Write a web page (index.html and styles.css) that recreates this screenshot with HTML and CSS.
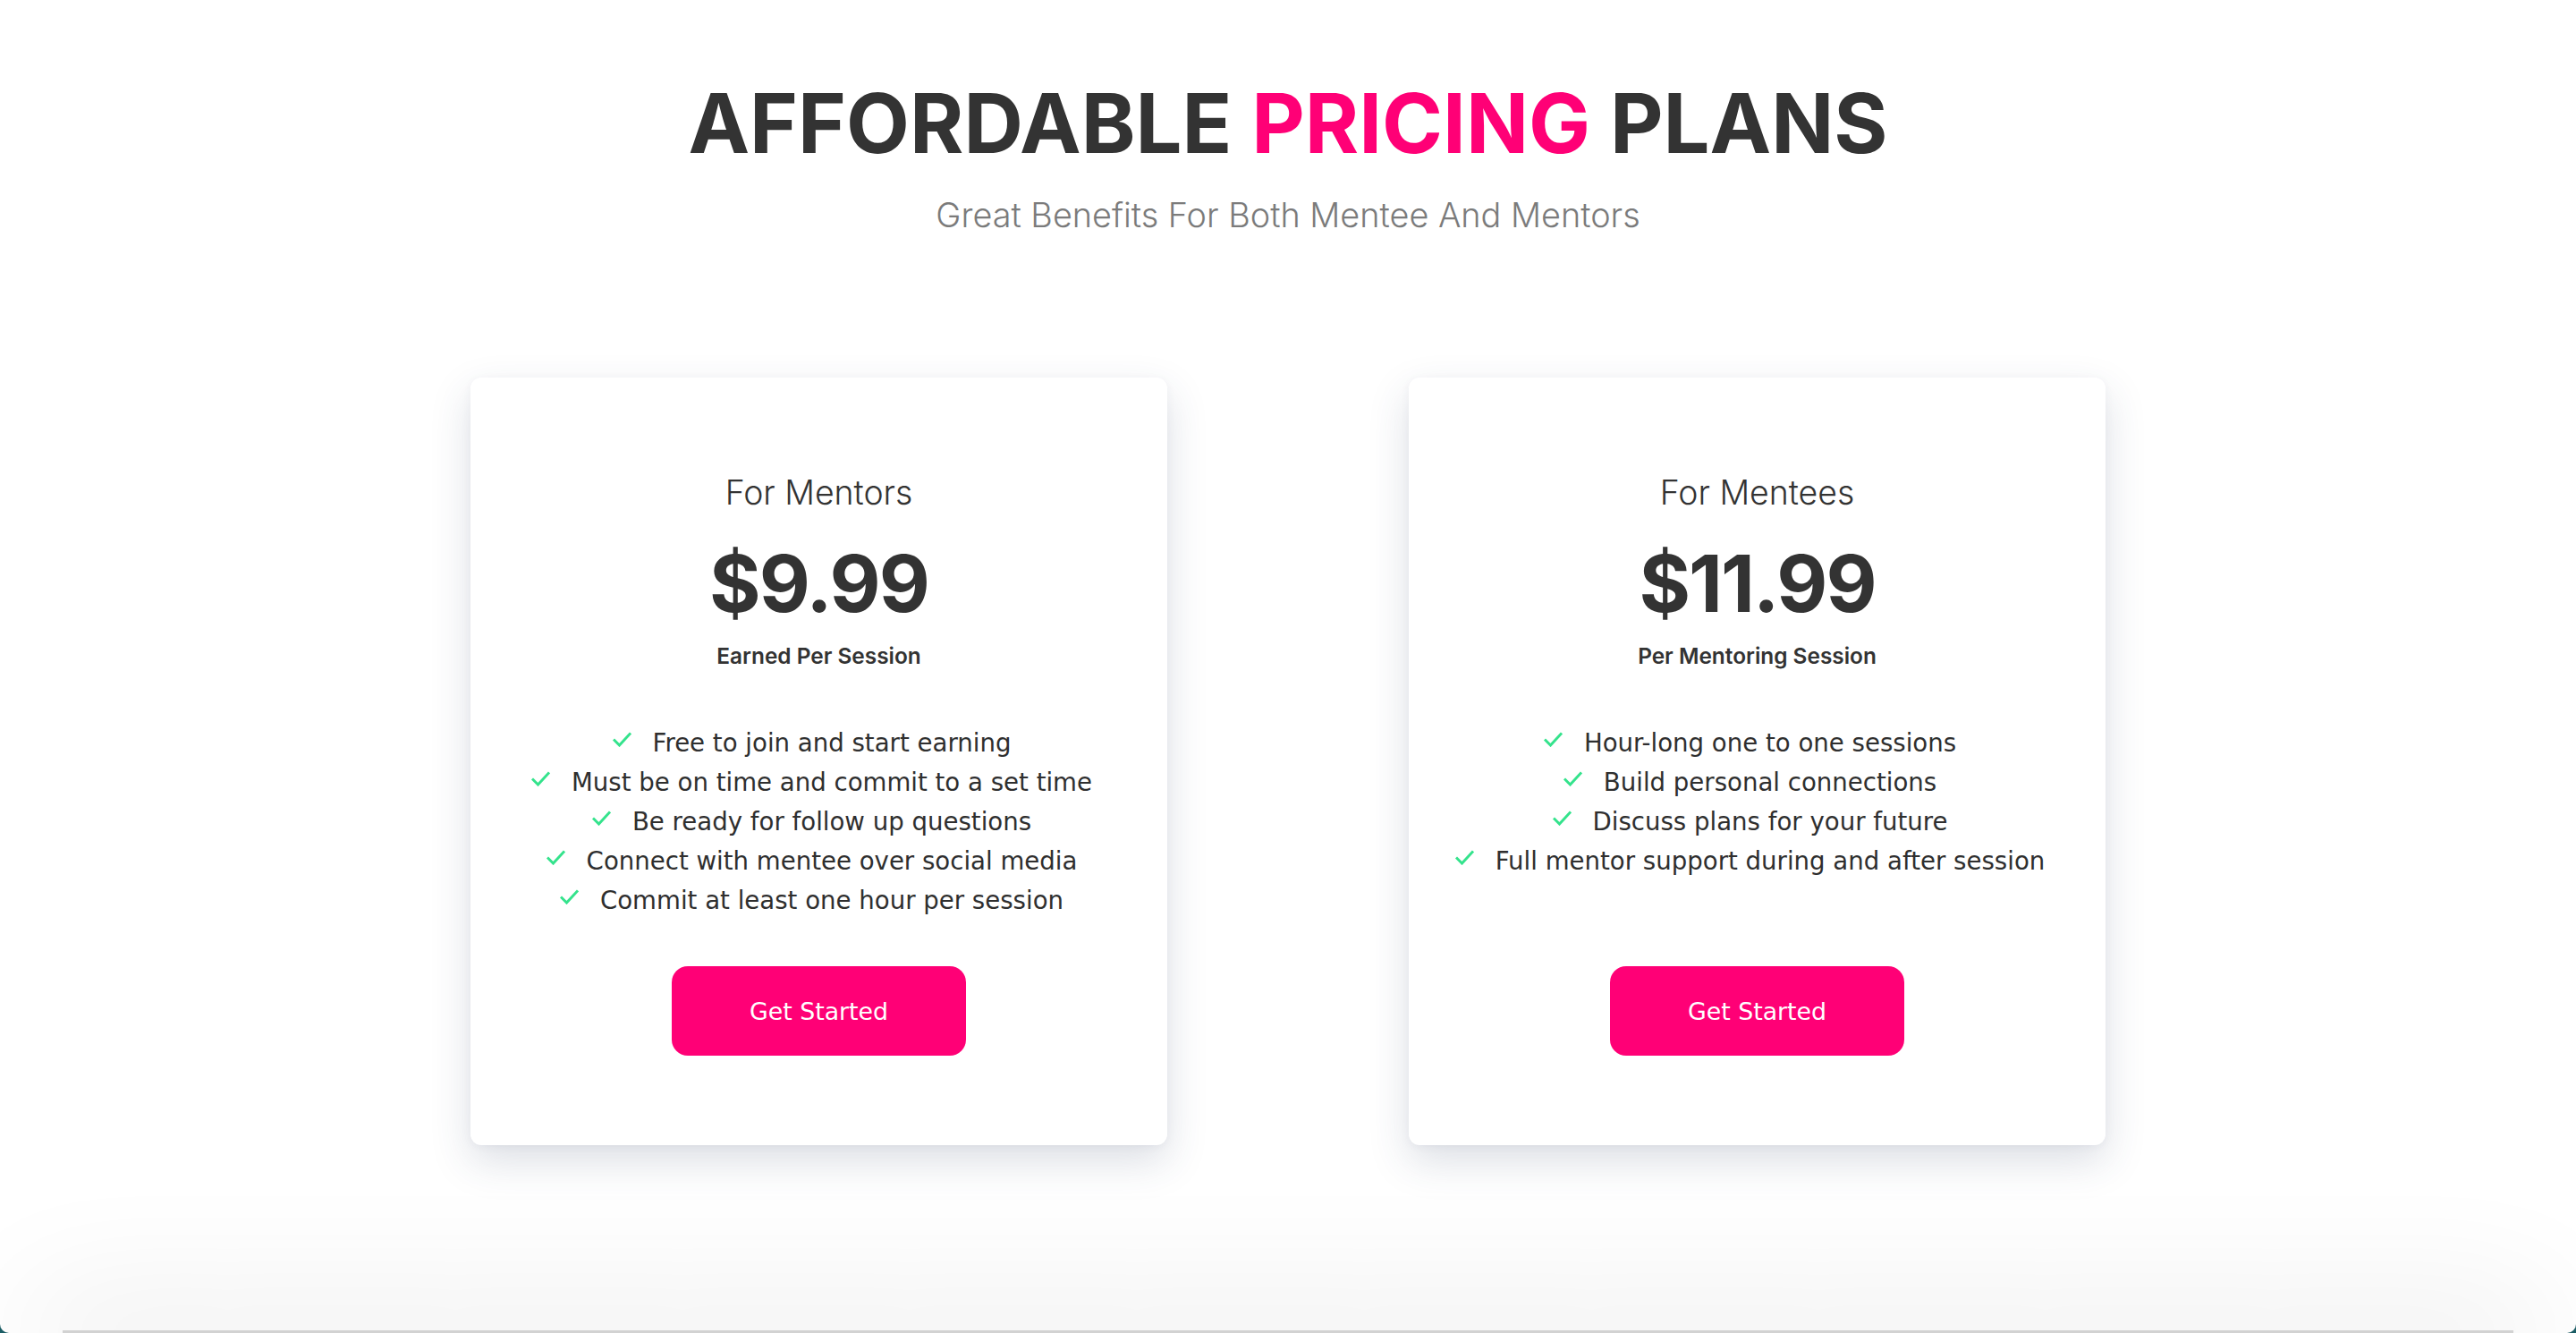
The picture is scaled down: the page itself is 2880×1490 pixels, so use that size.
FILE: index.html
```html
<!DOCTYPE html>
<html lang="en">
<head>
<meta charset="utf-8">
<title>Affordable Pricing Plans</title>
<link rel="stylesheet" href="styles.css">
</head>
<body>
<main class="page">
  <header class="intro">
    <h1 class="title">AFFORDABLE <span class="accent">PRICING</span> PLANS</h1>
    <p class="subtitle">Great Benefits For Both Mentee And Mentors</p>
  </header>
  <section class="plans">
    <article class="plan">
      <h2 class="plan-name">For Mentors</h2>
      <div class="plan-price">$9.99</div>
      <div class="plan-unit">Earned Per Session</div>
      <ul class="features">
        <li class="feature"><svg class="check" viewBox="0 0 20 17"><polyline points="1.5,9.5 7,15 18.5,2.5"/></svg><span>Free to join and start earning</span></li>
        <li class="feature"><svg class="check" viewBox="0 0 20 17"><polyline points="1.5,9.5 7,15 18.5,2.5"/></svg><span>Must be on time and commit to a set time</span></li>
        <li class="feature"><svg class="check" viewBox="0 0 20 17"><polyline points="1.5,9.5 7,15 18.5,2.5"/></svg><span>Be ready for follow up questions</span></li>
        <li class="feature"><svg class="check" viewBox="0 0 20 17"><polyline points="1.5,9.5 7,15 18.5,2.5"/></svg><span>Connect with mentee over social media</span></li>
        <li class="feature"><svg class="check" viewBox="0 0 20 17"><polyline points="1.5,9.5 7,15 18.5,2.5"/></svg><span>Commit at least one hour per session</span></li>
      </ul>
      <a class="cta" href="#">Get Started</a>
    </article>
    <article class="plan">
      <h2 class="plan-name">For Mentees</h2>
      <div class="plan-price">$11.99</div>
      <div class="plan-unit">Per Mentoring Session</div>
      <ul class="features">
        <li class="feature"><svg class="check" viewBox="0 0 20 17"><polyline points="1.5,9.5 7,15 18.5,2.5"/></svg><span>Hour-long one to one sessions</span></li>
        <li class="feature"><svg class="check" viewBox="0 0 20 17"><polyline points="1.5,9.5 7,15 18.5,2.5"/></svg><span>Build personal connections</span></li>
        <li class="feature"><svg class="check" viewBox="0 0 20 17"><polyline points="1.5,9.5 7,15 18.5,2.5"/></svg><span>Discuss plans for your future</span></li>
        <li class="feature"><svg class="check" viewBox="0 0 20 17"><polyline points="1.5,9.5 7,15 18.5,2.5"/></svg><span>Full mentor support during and after session</span></li>
      </ul>
      <a class="cta" href="#">Get Started</a>
    </article>
  </section>
</main>
<footer class="footer"></footer>
</body>
</html>
```
FILE: styles.css
```css
html, body {
  margin: 0;
  padding: 0;
}
body {
  background: #1c5e66;
  font-family: "DejaVu Sans", Verdana, sans-serif;
  color: #333;
}
.page {
  box-sizing: border-box;
  height: 1490px;
  padding-top: 82px;
  background: #fff;
  border-radius: 0 0 10px 10px;
}
.intro {
  text-align: center;
}
.title {
  margin: 0;
  font-family: Inter, "Liberation Sans", sans-serif;
  font-weight: 700;
  font-size: 92px;
  line-height: 112px;
  color: #333;
}
.accent {
  color: #ff0076;
}
.subtitle {
  margin: 22px 0 0;
  font-family: Inter, "Liberation Sans", sans-serif;
  font-weight: 300;
  font-size: 37.8px;
  line-height: 48px;
  color: #7b7b7b;
}
.plans {
  display: grid;
  grid-template-columns: 779px 779px;
  column-gap: 270px;
  justify-content: center;
  margin-top: 158px;
}
.plan {
  box-sizing: border-box;
  display: flex;
  flex-direction: column;
  align-items: center;
  padding: 105px 30px 100px;
  background: #fff;
  border-radius: 12px;
  box-shadow: 0 18px 45px rgba(50, 65, 100, 0.17), 0 2px 10px rgba(50, 65, 100, 0.05);
  text-align: center;
}
.plan-name {
  margin: 0;
  font-family: Inter, "Liberation Sans", sans-serif;
  font-weight: 300;
  font-size: 37.4px;
  line-height: 48px;
  color: #333;
}
.plan-price {
  margin-top: 27px;
  font-family: Inter, "Liberation Sans", sans-serif;
  font-weight: 700;
  font-size: 88px;
  line-height: 100px;
  letter-spacing: -2px;
  color: #333;
}
.plan-unit {
  margin-top: 15px;
  font-family: Inter, "Liberation Sans", sans-serif;
  font-weight: 600;
  font-size: 24.4px;
  line-height: 32px;
  color: #333;
}
.features {
  list-style: none;
  margin: 60px 0 51px;
  padding: 0;
}
.feature {
  display: flex;
  justify-content: center;
  align-items: flex-start;
  height: 44px;
  padding-right: 16px;
  font-size: 27.6px;
  line-height: 44px;
  color: #2f2f2f;
  white-space: nowrap;
}
.check {
  flex: none;
  width: 21px;
  height: 17px;
  margin: 9px 24px 0 0;
  fill: none;
  stroke: #34e38c;
  stroke-width: 3;
  stroke-linecap: square;
}
.cta {
  margin-top: auto;
  display: flex;
  align-items: center;
  justify-content: center;
  width: 329px;
  height: 100px;
  border-radius: 18px;
  background: #ff0076;
  color: #fff;
  font-size: 26.8px;
  text-decoration: none;
}
.footer {
  height: 3px;
  margin: -3px 70px 0;
  background: #d2d2d2;
  box-shadow: 0 0 140px 40px rgba(0, 0, 0, 0.075);
}
```
